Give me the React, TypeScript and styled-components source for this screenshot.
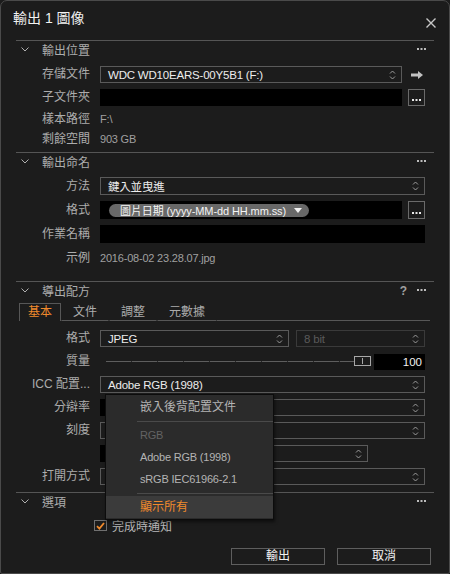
import styled, { createGlobalStyle } from "styled-components";

const menuItems = [
  { label: "嵌入後背配置文件" },
  { sep: true },
  { label: "RGB", disabled: true, latin: true },
  { label: "Adobe RGB (1998)", latin: true },
  { label: "sRGB IEC61966-2.1", latin: true },
  { sep: true },
  { label: "顯示所有", active: true },
];

function Spinner() {
  return (
    <SpinIcon width="7" height="12" viewBox="0 0 7 12">
      <path d="M1 4.5 L3.5 2 L6 4.5 M1 7.5 L3.5 10 L6 7.5" fill="none" stroke="#b8b8b8" strokeWidth="0.9" />
    </SpinIcon>
  );
}

function Dots({ color }: { color?: string }) {
  return (
    <svg width="9" height="3" viewBox="0 0 9 3">
      <rect x="0" y="0" width="2" height="2" fill={color || "#bdbdbd"} />
      <rect x="3.5" y="0" width="2" height="2" fill={color || "#bdbdbd"} />
      <rect x="7" y="0" width="2" height="2" fill={color || "#bdbdbd"} />
    </svg>
  );
}

function SectionHeader({ title, help }: { title: string; help?: boolean }) {
  return (
    <Header>
      <svg width="8" height="5" viewBox="0 0 8 5">
        <path d="M0.5 0.5 L4 4 L7.5 0.5" fill="none" stroke="#b0b0b0" strokeWidth="1" />
      </svg>
      <HeaderTitle>{title}</HeaderTitle>
      {help && <Help>?</Help>}
      <Dots />
    </Header>
  );
}

function Select({ value, $muted }: { value?: string; $muted?: boolean }) {
  return (
    <SelectBox $muted={$muted}>
      <SelectValue $muted={$muted}>{value}</SelectValue>
      <Spinner />
    </SelectBox>
  );
}

export default function App() {
  return (
    <>
      <GlobalStyle />
      <Window>
        <TitleBar>
          <Title>輸出 1 圖像</Title>
          <svg width="10" height="10" viewBox="0 0 10 10" style={{ marginTop: 17 }}>
            <path d="M0.5 0.5 L9.5 9.5 M9.5 0.5 L0.5 9.5" stroke="#c8c8c8" strokeWidth="1.4" />
          </svg>
        </TitleBar>

        <Section>
          <SectionHeader title="輸出位置" />
          <Fields $top={8} $bottom={6}>
            <Label>存儲文件</Label>
            <ControlRow>
              <Select value="WDC WD10EARS-00Y5B1 (F:)" />
              <IconSlot>
                <svg width="12" height="8" viewBox="0 0 12 8">
                  <path d="M0 2.5 H7 V0 L12 4 L7 8 V5.5 H0 Z" fill="#c2c2c2" />
                </svg>
              </IconSlot>
            </ControlRow>
            <Label>子文件夾</Label>
            <ControlRow>
              <BlackInput />
              <MoreButton>
                <Dots color="#e8e8e8" />
              </MoreButton>
            </ControlRow>
            <Label $h={14}>樣本路徑</Label>
            <Info $h={14}>F:\</Info>
            <Label $h={14}>剩餘空間</Label>
            <Info $h={14}>903 GB</Info>
          </Fields>
        </Section>

        <Section>
          <SectionHeader title="輸出命名" />
          <Fields $top={7} $bottom={14}>
            <Label $h={18}>方法</Label>
            <SelectCell $h={18}>
              <Select value="鍵入並曳進" />
            </SelectCell>
            <Label $h={18}>格式</Label>
            <ControlRow $h={18}>
              <BlackInput>
                <Pill>
                  圖片日期 (yyyy-MM-dd HH.mm.ss)
                  <svg width="8" height="5" viewBox="0 0 8 5">
                    <path d="M0 0 H8 L4 5 Z" fill="#f0f0f0" />
                  </svg>
                </Pill>
              </BlackInput>
              <MoreButton>
                <Dots color="#e8e8e8" />
              </MoreButton>
            </ControlRow>
            <Label $h={18}>作業名稱</Label>
            <BlackInput />
            <Label $h={18}>示例</Label>
            <Info $h={18}>2016-08-02 23.28.07.jpg</Info>
          </Fields>
        </Section>

        <Section>
          <SectionHeader title="導出配方" help />
          <TabBar>
            <Tab $active>基本</Tab>
            <Tab>文件</Tab>
            <Tab>調整</Tab>
            <Tab>元數據</Tab>
            <TabFill />
          </TabBar>
          <Fields $top={9} $bottom={7}>
            <Label>格式</Label>
            <SplitRow $first="189px" $end="0px">
              <Select value="JPEG" />
              <Select value="8 bit" $muted />
            </SplitRow>
            <Label>質量</Label>
            <SliderRow>
              <Track>
                <Thumb />
              </Track>
              <ValueBox>100</ValueBox>
            </SliderRow>
            <Label>ICC 配置...</Label>
            <Select value="Adobe RGB (1998)" />
            <Label>分辯率</Label>
            <SplitRow $first="80px" $end="0px">
              <BlackInput />
              <Select />
            </SplitRow>
            <Label>刻度</Label>
            <Select />
            <Label />
            <SplitRow $first="80px" $end="57px">
              <BlackInput />
              <Select />
            </SplitRow>
            <Label>打開方式</Label>
            <Select />
          </Fields>
        </Section>

        <Section $last>
          <SectionHeader title="選項" />
          <CheckRow>
            <CheckBox>
              <svg width="9" height="8" viewBox="0 0 9 8">
                <path d="M1 4.2 L3.4 6.6 L8 1" fill="none" stroke="#f08a2c" strokeWidth="1.8" />
              </svg>
            </CheckBox>
            <CheckLabel>完成時通知</CheckLabel>
          </CheckRow>
        </Section>

        <Footer>
          <Button>輸出</Button>
          <Button>取消</Button>
        </Footer>

        <Menu>
          {menuItems.map((item, index) =>
            item.sep ? (
              <MenuSep key={index} />
            ) : (
              <MenuItem
                key={index}
                $active={item.active}
                $disabled={item.disabled}
                $latin={item.latin}>
                {item.label}
              </MenuItem>
            )
          )}
        </Menu>
      </Window>
    </>
  );
}

const GlobalStyle = createGlobalStyle`
  * {
    box-sizing: border-box;
  }

  html,
  body {
    margin: 0;
    padding: 0;
    background: #1c1c1c;
  }

  body {
    font-family: "Liberation Sans", "Noto Sans CJK TC", sans-serif;
    font-size: 12px;
    color: #acacac;
  }
`;

const Window = styled.div`
  position: relative;
  display: flex;
  flex-direction: column;
  width: 450px;
  height: 574px;
  background: #1c1c1c;
  border: 1px solid #4a4a4a;
  border-radius: 7px 7px 2px 2px;
`;

const TitleBar = styled.div`
  display: flex;
  justify-content: space-between;
  align-items: flex-start;
  height: 39px;
  padding: 0 13px 0 12px;
`;

const Title = styled.div`
  margin-top: 9px;
  line-height: 16px;
  font-size: 14px;
  color: #f2f2f2;
`;

const Section = styled.div<{ $last?: boolean }>`
  margin: 0 15px;
  border-top: 1px solid #555;
`;

const Header = styled.div`
  display: flex;
  align-items: center;
  height: 17px;
  padding: 0 8px 0 5px;

  svg:last-child {
    margin-left: 10px;
  }
`;

const HeaderTitle = styled.div`
  flex: 1;
  margin-left: 13px;
  font-size: 12px;
  color: #adadad;
`;

const Help = styled.div`
  font-size: 12px;
  font-weight: bold;
  color: #a0a0a0;
`;

const Fields = styled.div<{ $top: number; $bottom: number }>`
  display: grid;
  grid-template-columns: 74px 1fr;
  column-gap: 10px;
  row-gap: 6px;
  align-items: center;
  padding: ${(p) => p.$top}px 9px ${(p) => p.$bottom}px 0;
`;

const Label = styled.div<{ $h?: number }>`
  height: ${(p) => p.$h || 17}px;
  line-height: ${(p) => p.$h || 17}px;
  text-align: right;
  white-space: nowrap;
  color: #acacac;
`;

const Info = styled.div<{ $h?: number }>`
  height: ${(p) => p.$h || 17}px;
  line-height: ${(p) => p.$h || 17}px;
  font-size: 11px;
  letter-spacing: -0.2px;
  color: #a0a0a0;
`;

const ControlRow = styled.div<{ $h?: number }>`
  display: flex;
  gap: 6px;
  height: ${(p) => p.$h || 17}px;
`;

const SelectCell = styled.div<{ $h?: number }>`
  display: flex;
  height: ${(p) => p.$h || 17}px;
`;

const SplitRow = styled.div<{ $first: string; $end: string }>`
  display: grid;
  grid-template-columns: ${(p) => p.$first} 1fr;
  column-gap: 7px;
  height: 17px;
  margin-right: ${(p) => p.$end};
`;

const SelectBox = styled.div<{ $muted?: boolean }>`
  flex: 1;
  display: flex;
  align-items: center;
  justify-content: space-between;
  height: 100%;
  min-height: 17px;
  padding: 0 5px 0 7px;
  border: 1px solid ${(p) => (p.$muted ? "#3a3a3a" : "#5a5a5a")};
  background: #1c1c1c;
`;

const SelectValue = styled.span<{ $muted?: boolean }>`
  font-size: 11.5px;
  letter-spacing: -0.2px;
  white-space: nowrap;
  color: ${(p) => (p.$muted ? "#5a5a5a" : "#ececec")};
`;

const SpinIcon = styled.svg`
  flex-shrink: 0;
  opacity: 0.9;
`;

const IconSlot = styled.div`
  display: flex;
  align-items: center;
  justify-content: center;
  width: 17px;
`;

const BlackInput = styled.div`
  flex: 1;
  display: flex;
  align-items: center;
  height: 100%;
  min-height: 17px;
  background: #000;
`;

const MoreButton = styled.div`
  display: flex;
  align-items: flex-end;
  justify-content: center;
  width: 17px;
  padding-bottom: 3px;
  border: 1px solid #6a6a6a;
`;

const Pill = styled.div`
  display: flex;
  align-items: center;
  gap: 8px;
  height: 13px;
  margin-left: 9px;
  padding: 0 7px 0 11px;
  border-radius: 7px;
  background: #686868;
  font-size: 11px;
  letter-spacing: -0.1px;
  color: #f4f4f4;
  white-space: nowrap;
`;

const TabBar = styled.div`
  display: flex;
  height: 18px;
  margin: 4px 4px 0 3px;
`;

const Tab = styled.div<{ $active?: boolean }>`
  height: 18px;
  line-height: 17px;
  padding: 0 ${(p) => (p.$active ? 8 : 11)}px;
  border: 1px solid ${(p) => (p.$active ? "#575757" : "transparent")};
  border-bottom: ${(p) => (p.$active ? "none" : "1px solid #575757")};
  font-size: 12px;
  color: ${(p) => (p.$active ? "#f08a2c" : "#acacac")};
`;

const TabFill = styled.div`
  flex: 1;
  border-bottom: 1px solid #575757;
`;

const SliderRow = styled.div`
  display: flex;
  align-items: center;
  gap: 3px;
  height: 16px;
`;

const Track = styled.div`
  position: relative;
  flex: 1;
  height: 1px;
  margin-left: 6px;
  background: repeating-linear-gradient(
    to right,
    #5e5e5e 0px,
    #5e5e5e 25px,
    #2a2a2a 25px,
    #2a2a2a 26px
  );
`;

const Thumb = styled.div`
  position: absolute;
  right: 0;
  top: -5px;
  width: 17px;
  height: 10px;
  border: 1px solid #a8a8a8;
  background: #1c1c1c;

  &::after {
    content: "";
    position: absolute;
    left: 7px;
    top: 1px;
    width: 1px;
    height: 6px;
    background: #a8a8a8;
  }
`;

const ValueBox = styled.div`
  width: 51px;
  height: 16px;
  line-height: 16px;
  padding-right: 3px;
  text-align: right;
  background: #000;
  font-size: 11.5px;
  color: #f0f0f0;
`;

const CheckRow = styled.div`
  display: flex;
  align-items: center;
  gap: 5px;
  padding: 7px 0 0 78px;
`;

const CheckBox = styled.div`
  display: flex;
  align-items: center;
  justify-content: center;
  width: 13px;
  height: 11px;
  border: 1px solid #707070;
`;

const CheckLabel = styled.div`
  font-size: 12px;
  color: #b8b8b8;
`;

const Footer = styled.div`
  display: flex;
  justify-content: flex-end;
  gap: 12px;
  margin-top: auto;
  padding: 0 18px 8px 0;
`;

const Button = styled.div`
  width: 94px;
  height: 17px;
  line-height: 15px;
  text-align: center;
  border: 1px solid #5e5e5e;
  font-size: 12px;
  color: #f2f2f2;
`;

const Menu = styled.div`
  position: absolute;
  left: 104px;
  top: 393px;
  width: 169px;
  padding: 1px 0;
  background: #2b2b2b;
  border: 1px solid #0c0c0c;
  box-shadow: 1px 2px 3px rgba(0, 0, 0, 0.5);
`;

const MenuItem = styled.div<{ $active?: boolean; $disabled?: boolean; $latin?: boolean }>`
  height: 22px;
  line-height: 22px;
  padding-left: 34px;
  font-size: ${(p) => (p.$latin ? "11px" : "12px")};
  letter-spacing: ${(p) => (p.$latin ? "-0.2px" : "0")};
  background: ${(p) => (p.$active ? "#3b3b3b" : "transparent")};
  color: ${(p) => (p.$active ? "#f08a2c" : p.$disabled ? "#636363" : "#b4b4b4")};
`;

const MenuSep = styled.div`
  height: 1px;
  margin: 3px 0 2px 31px;
  background: #4a4a4a;
`;
